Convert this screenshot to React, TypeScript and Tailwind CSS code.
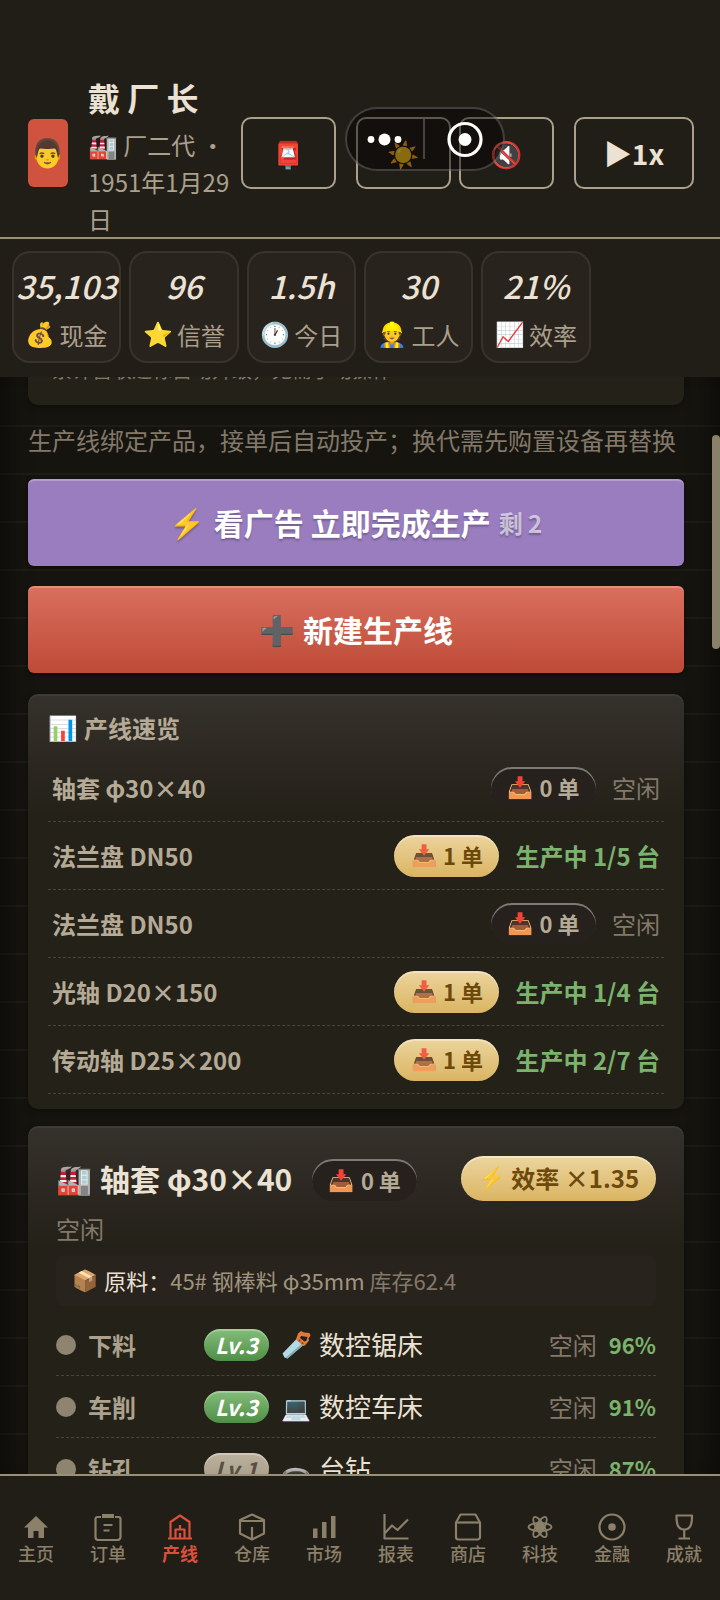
import React from "react";

const BODY = "font-['Noto_Sans_CJK_SC','Noto_Color_Emoji',sans-serif]";
const HAND = "font-['Noto_Sans_CJK_SC',sans-serif]";

function Emoji({ children, className = "" }: { children: React.ReactNode; className?: string }) {
  return <span className={`font-['Noto_Color_Emoji'] leading-none font-normal ${className}`}>{children}</span>;
}

function HeaderButton({ label, className = "", children }: { label: string; className?: string; children: React.ReactNode }) {
  return (
    <button
      aria-label={label}
      className={`flex h-[72px] shrink-0 items-center justify-center rounded-[10px] border-2 border-[#aaa08b] ${className}`}
    >
      {children}
    </button>
  );
}

function Capsule() {
  return (
    <div className="absolute top-[107px] left-[345px] h-16 w-40 rounded-full border-2 border-white/20 bg-black/45">
      <svg viewBox="0 0 160 64" className="-m-0.5 h-16 w-40 max-w-none" fill="#fff">
        <circle cx="26" cy="32.500" r="3.400" />
        <circle cx="39.500" cy="32.500" r="6" />
        <circle cx="53" cy="32.500" r="3.400" />
        <path d="M79 12v40" stroke="#ffffff" strokeOpacity=".22" strokeWidth="2" />
        <circle cx="120" cy="32.500" r="16" fill="none" stroke="#fff" strokeWidth="3.200" />
        <circle cx="120" cy="32.500" r="6.500" />
      </svg>
    </div>
  );
}

function Saw() {
  return (
    <svg viewBox="0 0 30 30" className="size-[30px]">
      <path d="M16 8.500 22.500 15 6.500 28.500 3.500 27.500 1.500 23.500z" fill="#b3dbe4" />
      <path d="m22.500 15-16 13.500-2-.700L21 13.500z" fill="#82aeb9" />
      <path
        fillRule="evenodd"
        d="M17 3.500 20 1l3 1.500 5.500.5 1 2.500-2 3 .5 2-4 5-2 .5-7-6.500zM20 6l-1 2 4.500 3.500 2-1 1-3.500-3-.5z"
        fill="#e07a3c"
      />
      <circle cx="18.500" cy="10.500" r=".900" fill="#7d3d1b" />
      <circle cx="21.500" cy="13.200" r=".900" fill="#7d3d1b" />
    </svg>
  );
}

const stats = [
  { value: "35,103", icon: "💰", label: "现金" },
  { value: "96", icon: "⭐", label: "信誉" },
  { value: "1.5h", icon: "🕐", label: "今日" },
  { value: "30", icon: "👷", label: "工人" },
  { value: "21%", icon: "📈", label: "效率" },
];

const lines = [
  { name: "轴套 φ30×40", orders: 0, state: "空闲" },
  { name: "法兰盘 DN50", orders: 1, state: "生产中 1/5 台" },
  { name: "法兰盘 DN50", orders: 0, state: "空闲" },
  { name: "光轴 D20×150", orders: 1, state: "生产中 1/4 台" },
  { name: "传动轴 D25×200", orders: 1, state: "生产中 2/7 台" },
];

const steps = [
  { name: "下料", level: 3, icon: <Saw />, machine: "数控锯床", rate: "96%" },
  { name: "车削", level: 3, icon: <Emoji className="mt-1">💻</Emoji>, machine: "数控车床", rate: "91%" },
  { name: "钻孔", level: 1, icon: <Emoji className="mt-1">🕳️</Emoji>, machine: "台钻", rate: "87%" },
];

function OrderPill({ count }: { count: number }) {
  const tone =
    count > 0
      ? "bg-linear-to-b from-[#ecd49c] to-[#dab562] text-[#6d4a0c] shadow-[inset_0_2px_0_rgba(255,255,255,0.35)]"
      : "bg-[#26211c] text-[#b5aa96] shadow-[inset_0_2px_0_rgba(255,255,255,0.4)]";
  return (
    <span className={`flex h-[42px] w-[105px] shrink-0 items-center justify-center gap-1.5 rounded-full text-[22px] font-bold ${tone}`}>
      <Emoji className={count > 0 ? "mt-0.5 text-[21px] opacity-80" : "mt-0.5 text-[21px]"}>📥</Emoji>
      {count} 单
    </span>
  );
}

const panel =
  "rounded-[10px] bg-[#242119] bg-[linear-gradient(180deg,#35312b_0px,#242119_120px)] shadow-[inset_0_2px_0_rgba(255,255,255,0.05),0_2px_6px_rgba(0,0,0,0.35)]";

const icons: Record<string, React.ReactNode> = {
  主页: <path d="M14 3 2 14.500h4V25h5.500v-7h5v7H22V14.500h4z" fill="currentColor" stroke="none" />,
  订单: (
    <>
      <path d="M7 4H3.500a2 2 0 0 0-2 2v18a3 3 0 0 0 3 3h19a3 3 0 0 0 3-3V6a2 2 0 0 0-2-2H21" />
      <path d="M8 3h12" strokeWidth="4" />
      <path d="M9.500 12h9M9.500 17.500h6" />
    </>
  ),
  产线: (
    <>
      <path d="M2 25.500h24M4.500 25V9L14 2.500 23.500 9v16" />
      <path d="M9.500 25v-8.500h9V25M14 12v5M14 20v5" />
    </>
  ),
  仓库: (
    <>
      <path d="M14 1.500 26 7v13.500L14 26.500 2 20.500V7z" />
      <path d="M2 8h24M14 14v12" />
    </>
  ),
  市场: <path d="M3 15.500h4.500V25H3zM12 9h4.500v16H12zM21 3h4.500v22H21z" fill="currentColor" stroke="none" />,
  报表: <path d="M2.500 1v24.500h24M3 20l7-7.500 5.500 4.500L26 6.500" />,
  商店: (
    <>
      <path d="M2 9.500 6.500 1.500h15L26 9.500V24a2.500 2.500 0 0 1-2.500 2.500h-19A2.500 2.500 0 0 1 2 24z" />
      <path d="M2 9.500h24" />
    </>
  ),
  科技: (
    <>
      <ellipse cx="14" cy="14" rx="11.500" ry="4" strokeWidth="1.800" />
      <ellipse cx="14" cy="14" rx="11.500" ry="4" strokeWidth="1.800" transform="rotate(60 14 14)" />
      <ellipse cx="14" cy="14" rx="11.500" ry="4" strokeWidth="1.800" transform="rotate(120 14 14)" />
      <circle cx="14" cy="14" r="5" fill="currentColor" stroke="none" />
    </>
  ),
  金融: (
    <>
      <circle cx="14" cy="14" r="12.500" />
      <circle cx="14" cy="14" r="3.800" fill="currentColor" stroke="none" />
    </>
  ),
  成就: <path d="M6.500 2.500h15.500c0 8-1 14-7.750 14S6.500 10.500 6.500 2.500zM14.250 17v8M8.500 25.500h11.500" />,
};

export default function App() {
  return (
    <div className={`relative flex h-screen flex-col overflow-hidden bg-[#16140f] text-[#ebe2d3] ${BODY}`}>
      <header className="relative flex shrink-0 items-center border-b-2 border-[#999078] bg-[#211d17] pt-[68px] pr-[26px] pl-7">
        <div className="flex h-[68px] w-10 shrink-0 items-center justify-center rounded-md bg-[#cf533e]">
          <Emoji className="mt-0.5 text-[28px]">👨</Emoji>
        </div>
        <div className="ml-5 min-w-0 flex-1">
          <h1 className="text-[32px] leading-[58px] font-bold whitespace-nowrap">戴 厂 长</h1>
          <p className="text-2xl leading-[37px] text-[#aaa08c]">
            <Emoji className="text-[24px]">🏭</Emoji> 厂二代 ·<br />
            1951年1月29日
          </p>
        </div>
        <div className="ml-2 flex shrink-0">
          <HeaderButton label="信箱" className="w-[95px]">
            <Emoji className="mt-1 text-[26px]">📮</Emoji>
          </HeaderButton>
          <HeaderButton label="主题" className="ml-5 w-[95px]">
            <Emoji className="mt-1 text-[26px]">☀️</Emoji>
          </HeaderButton>
          <HeaderButton label="声音" className="ml-2 w-[95px]">
            <Emoji className="mt-1 text-[26px]">🔇</Emoji>
          </HeaderButton>
          <HeaderButton label="速度 1x" className="ml-5 w-[120px] text-[28px] font-bold">
            ▶1x
          </HeaderButton>
        </div>
        <Capsule />
      </header>

      <section className="grid shrink-0 grid-cols-6 gap-2 bg-[#211d17] px-3 pt-3 pb-[14px]">
        {stats.map((s) => (
          <div
            key={s.label}
            className="flex h-[112px] flex-col items-center rounded-[18px] border-2 border-[#38332c] bg-[#29231e] pt-1.5"
          >
            <strong className={`text-[32px] leading-[52px] font-medium italic ${HAND}`}>{s.value}</strong>
            <span className="flex items-center gap-1 text-2xl leading-[48px] text-[#aa9f8b]">
              <Emoji className="text-[24px]">{s.icon}</Emoji>
              {s.label}
            </span>
          </div>
        ))}
      </section>

      <main className="relative min-h-0 flex-1 overflow-hidden bg-[repeating-linear-gradient(180deg,transparent_0px,transparent_46px,#1e1c17_46px,#1e1c17_48px)] bg-position-[0_2px] px-7 shadow-[inset_24px_0_24px_-18px_rgba(0,0,0,0.5),inset_-24px_0_24px_-18px_rgba(0,0,0,0.5)]">
        <div className="pr-2">
          <div className="-mt-[60px] rounded-[10px] bg-[#242119] px-6 pt-[33px] pb-[11px] shadow-[0_2px_6px_rgba(0,0,0,0.35)]">
            <p className="h-11 text-[20px] leading-10 text-[#857a67]">累计营收达标自动升级，无需手动操作</p>
          </div>
          <p className="mt-4 text-2xl leading-[38px] whitespace-nowrap text-[#83796a]">
            生产线绑定产品，接单后自动投产；换代需先购置设备再替换
          </p>

          <button className="mt-5 flex h-[87px] w-full items-center justify-center gap-2 rounded-md bg-[#997dbf] text-[30px] font-bold text-white shadow-[inset_0_2px_0_rgba(255,255,255,0.25),0_2px_5px_rgba(0,0,0,0.4)] text-shadow-[0_2px_2px_rgba(0,0,0,0.25)]">
            <Emoji className="mt-1 text-[29px]">⚡</Emoji>
            <span>看广告 立即完成生产</span>
            <span className="text-2xl text-white/60">剩 2</span>
          </button>
          <button className="mt-5 flex h-[87px] w-full items-center justify-center gap-2 rounded-md bg-linear-to-b from-[#da6f5e] to-[#be4a37] text-[30px] font-bold text-white shadow-[inset_0_2px_0_rgba(255,255,255,0.22),0_2px_5px_rgba(0,0,0,0.4)]">
            <Emoji className="mt-1 text-[29px]">➕</Emoji>
            <span>新建生产线</span>
          </button>

          <section className={`mt-[21px] px-5 pb-[15px] ${panel}`}>
            <h2 className="flex h-[60px] items-center gap-1.5 pt-2 text-2xl font-bold text-[#b5aa96]">
              <Emoji className="mt-0.5 text-[24px]">📊</Emoji>
              产线速览
            </h2>
            <ul>
              {lines.map((l, i) => (
                <li key={i} className="flex h-[68px] items-center gap-4 border-b border-dashed border-[#4a453b] px-1">
                  <span className="flex-1 text-2xl font-bold text-[#b5aa96]">{l.name}</span>
                  <OrderPill count={l.orders} />
                  <span className={`text-2xl ${l.orders > 0 ? "font-bold text-[#7bb26c]" : "text-[#83796a]"}`}>{l.state}</span>
                </li>
              ))}
            </ul>
          </section>

          <section className={`mt-[17px] px-7 pt-6 ${panel}`}>
            <div className="flex h-14 items-center">
              <h2 className="flex items-center gap-2 text-[30px] font-bold">
                <Emoji className="mt-1 text-[29px]">🏭</Emoji>
                轴套 φ30×40
              </h2>
              <div className="ml-5 flex-1 pt-1">
                <OrderPill count={0} />
              </div>
              <span className="flex h-[45px] w-[195px] items-center justify-center gap-1.5 rounded-full bg-linear-to-b from-[#edd59f] to-[#dab562] text-2xl font-bold text-[#6d4a0c] shadow-[inset_0_2px_0_rgba(255,255,255,0.4)]">
                <Emoji className="mt-0.5 text-[22px] opacity-85">⚡</Emoji>
                效率 ×1.35
              </span>
            </div>
            <p className="h-[49px] text-2xl leading-[46px] text-[#83796a]">空闲</p>
            <div className="flex h-[51px] items-center gap-1.5 rounded-lg bg-[#29231e] px-4 text-[22px] text-[#a0957f]">
              <Emoji className="mt-0.5 text-[21px]">📦</Emoji>
              <p>
                <span className="text-[#ebe2d3]">原料：</span>45# 钢棒料 φ35mm <span className="text-[#83796a]">库存62.4</span>
              </p>
            </div>
            <ul className="mt-2">
              {steps.map((s) => (
                <li key={s.name} className="flex h-[62px] items-center border-b border-dashed border-[#4a453b] text-2xl">
                  <span className="size-5 rounded-full bg-[#8f8470]" />
                  <span className="ml-3 w-[116px] font-bold text-[#aca18d]">{s.name}</span>
                  <span
                    className={`flex h-8 items-center rounded-full px-[11px] text-[22px] font-bold italic ${HAND} ${
                      s.level > 1
                        ? "bg-linear-to-b from-[#85bd7b] to-[#4e8f45] text-white shadow-[inset_0_2px_0_rgba(255,255,255,0.25)]"
                        : "bg-linear-to-b from-[#bcb29e] to-[#a39983] text-[#575042] shadow-[inset_0_2px_0_rgba(255,255,255,0.3)]"
                    }`}
                  >
                    Lv.{s.level}
                  </span>
                  <span className="ml-3 flex w-[30px] justify-center">{s.icon}</span>
                  <span className="ml-2 flex-1 text-[26px]">{s.machine}</span>
                  <span className="text-[#83796a]">空闲</span>
                  <span className="ml-3 text-[22px] font-bold text-[#7bb26c]">{s.rate}</span>
                </li>
              ))}
            </ul>
          </section>
        </div>
        <div className="absolute top-[58px] right-0 h-[214px] w-2 rounded bg-[#8b8069]" />
      </main>

      <nav className="grid h-[126px] shrink-0 grid-cols-10 border-t-2 border-[#999078] bg-[#211d17] pt-[37px]">
        {Object.keys(icons).map((label) => (
          <a
            key={label}
            href={`#${label}`}
            className={`flex flex-col items-center ${label === "产线" ? "font-bold text-[#d9513d]" : "font-medium text-[#8b8069]"}`}
          >
            <svg viewBox="0 0 28 28" className="size-7" fill="none" stroke="currentColor" strokeWidth="2.200" strokeLinejoin="round">
              {icons[label]}
            </svg>
            <span className={`text-lg leading-6 ${HAND}`}>{label}</span>
          </a>
        ))}
      </nav>
    </div>
  );
}
